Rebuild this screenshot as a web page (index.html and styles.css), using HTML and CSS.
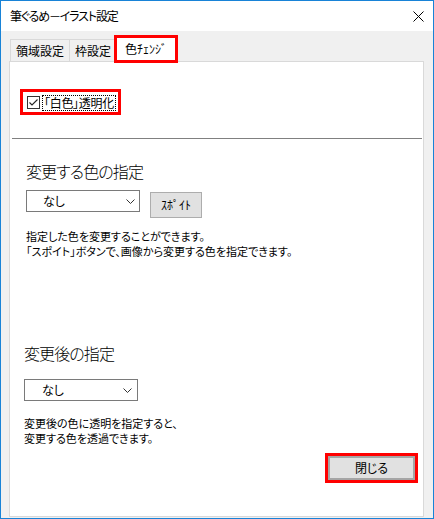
FILE: index.html
```html
<!DOCTYPE html>
<html lang="ja">
<head>
<meta charset="utf-8">
<title>筆ぐるめ－イラスト設定</title>
<link rel="stylesheet" href="styles.css">
</head>
<body>
<div class="window">
  <div class="titlebar">
    <span class="title">筆ぐるめ－イラスト設定</span>
    <svg class="close" width="11" height="11" viewBox="0 0 11 11"><path d="M0.5 0.5 L10.5 10.5 M10.5 0.5 L0.5 10.5" stroke="#000" stroke-width="1" fill="none"/></svg>
  </div>
  <div class="client">
    <div class="tabs">
      <div class="tab tab1">領域設定</div>
      <div class="tab tab2">枠設定</div>
      <div class="tab tab-active">色ﾁｪﾝｼﾞ</div>
    </div>
    <div class="panel">
      <div class="cb-mark">
        <span class="checkbox">
          <svg width="13" height="13" viewBox="0 0 13 13"><rect x="0.5" y="0.5" width="12" height="12" fill="#fff" stroke="#333"/><path d="M2.5 6.5 L5 9 L10.5 3.5" stroke="#222" stroke-width="1.1" fill="none"/></svg>
        </span>
        <span class="cb-label">「白色」透明化</span>
      </div>
      <div class="sep"></div>
      <div class="heading h1">変更する色の指定</div>
      <div class="row1">
        <div class="select s1"><span>なし</span><svg width="9" height="5" viewBox="0 0 9 5"><path d="M0.5 0.5 L4.5 4.5 L8.5 0.5" stroke="#333" fill="none"/></svg></div>
        <div class="btn spoit">ｽﾎﾟｲﾄ</div>
      </div>
      <div class="desc d1">
        <div class="line">指定した色を変更することができます。</div>
        <div class="line">「スポイト」ボタンで、画像から変更する色を指定できます。</div>
      </div>
      <div class="heading h2">変更後の指定</div>
      <div class="select s2"><span>なし</span><svg width="9" height="5" viewBox="0 0 9 5"><path d="M0.5 0.5 L4.5 4.5 L8.5 0.5" stroke="#333" fill="none"/></svg></div>
      <div class="desc d2">
        <div class="line">変更後の色に透明を指定すると、</div>
        <div class="line">変更する色を透過できます。</div>
      </div>
      <div class="footer">
        <div class="close-mark"><div class="btn closebtn">閉じる</div></div>
      </div>
    </div>
  </div>
</div>
</body>
</html>
```
FILE: styles.css
```css
* { box-sizing: border-box; }
html, body { margin: 0; padding: 0; }
body {
  width: 434px;
  height: 519px;
  font-family: "Noto Sans CJK JP", "Noto Sans", sans-serif;
  font-feature-settings: "palt" 1;
  font-size: 12px;
  color: #000;
  background: #fff;
}
.window {
  width: 434px;
  height: 519px;
  border: 1px solid #1883d7;
  display: flex;
  flex-direction: column;
}
.titlebar {
  height: 30px;
  flex: none;
  background: #fff;
  display: flex;
  align-items: center;
  justify-content: space-between;
  padding: 0 9px 0 9px;
}
.title { font-size: 12px; line-height: 16px; letter-spacing: -1.15px; }
.close { display: block; margin-top: 1px; }
.client {
  flex: 1;
  background: #f0f0f0;
  padding: 5px 9px 1px 8px;
  display: flex;
  flex-direction: column;
}
.tabs {
  height: 25px;
  flex: none;
  display: flex;
  align-items: flex-end;
  padding-left: 1px;
  position: relative;
  z-index: 1;
}
.tab {
  height: 22px;
  border: 1px solid #d9d9d9;
  border-bottom: none;
  background: #f0f0f0;
  display: flex;
  align-items: center;
  justify-content: center;
  font-size: 12px;
  line-height: 14px;
}
.tab1 { width: 60px; }
.tab2 { width: 48px; margin-left: -1px; }
.tab-active {
  width: 62px;
  height: 26px;
  margin-left: -2px;
  margin-bottom: -1px;
  background: #fff;
  padding-bottom: 2px;
  outline: 3px solid #f00;
  outline-offset: -2px;
}
.panel {
  flex: 1;
  background: #fff;
  border: 1px solid #d9d9d9;
  display: flex;
  flex-direction: column;
  align-items: flex-start;
}
.cb-mark {
  margin: 27px 0 0 10px;
  height: 26px;
  border: 3px solid #f00;
  display: flex;
  align-items: center;
  padding: 0 2px 0 4px;
}
.checkbox { display: block; width: 13px; height: 13px; margin-top: 1px; }
.checkbox svg { display: block; }
.cb-label {
  margin-left: 2px;
  height: 16px;
  border: 1px dotted #000;
  padding: 0 1px 0 1px;
  line-height: 14px;
  font-size: 12px;
  letter-spacing: -0.3px;
  white-space: nowrap;
  margin-top: 1px;
}
.sep {
  align-self: stretch;
  margin: 23px 1px 0 2px;
  height: 1px;
  background: #808080;
}
.heading {
  font-size: 16px;
  font-weight: 300;
  line-height: 22px;
  height: 22px;
  letter-spacing: -0.9px;
  white-space: nowrap;
}
.h1 { margin: 21px 0 0 16px; }
.h2 { margin: 83px 0 0 14px; }
.row1 {
  display: flex;
  align-items: flex-start;
  margin: 8px 0 0 16px;
}
.select {
  width: 114px;
  height: 22px;
  border: 1px solid #7a7a7a;
  background: #fff;
  display: flex;
  align-items: center;
  justify-content: space-between;
  padding: 0 4px 0 16px;
  font-size: 12px;
  line-height: 14px;
}
.select svg { display: block; }
.s2 { margin: 15px 0 0 14px; padding-left: 17px; padding-right: 5px; }
.btn {
  background: #e1e1e1;
  border: 1px solid #adadad;
  display: flex;
  align-items: center;
  justify-content: center;
  font-size: 12px;
  line-height: 14px;
}
.spoit {
  width: 52px;
  height: 26px;
  margin: 2px 0 0 10px;
}
.desc {
  font-size: 11px;
  letter-spacing: 0;
  white-space: nowrap;
}
.line { height: 15px; line-height: 15px; }
.d1 { margin: 11px 0 0 16px; }
.d2 { margin: 15px 0 0 14px; }
.footer {
  align-self: stretch;
  display: flex;
  justify-content: flex-end;
  margin-top: 7px;
  padding-right: 5px;
}
.close-mark {
  border: 3px solid #f00;
  width: 93px;
  height: 30px;
}
.closebtn {
  width: 100%;
  height: 100%;
  border: 2px solid #a5a5a5;
}
```
